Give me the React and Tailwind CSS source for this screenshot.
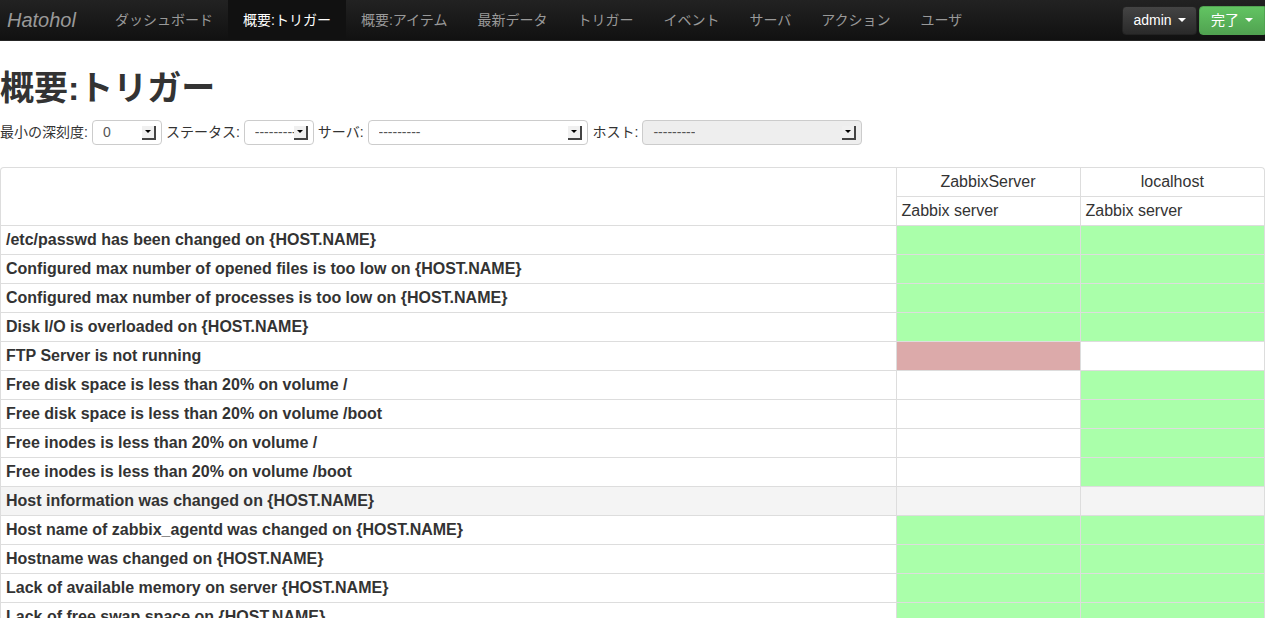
const font = { fontFamily: '"Liberation Sans", "Noto Sans CJK JP", sans-serif' };

const navItems = ['ダッシュボード', '概要:トリガー', '概要:アイテム', '最新データ', 'トリガー', 'イベント', 'サーバ', 'アクション', 'ユーザ'];

const G = 'g';
const R = 'r';
const W = 'w';
const rows = [
  ['/etc/passwd has been changed on {HOST.NAME}', G, G],
  ['Configured max number of opened files is too low on {HOST.NAME}', G, G],
  ['Configured max number of processes is too low on {HOST.NAME}', G, G],
  ['Disk I/O is overloaded on {HOST.NAME}', G, G],
  ['FTP Server is not running', R, W],
  ['Free disk space is less than 20% on volume /', W, G],
  ['Free disk space is less than 20% on volume /boot', W, G],
  ['Free inodes is less than 20% on volume /', W, G],
  ['Free inodes is less than 20% on volume /boot', W, G],
  ['Host information was changed on {HOST.NAME}', 'x', 'x'],
  ['Host name of zabbix_agentd was changed on {HOST.NAME}', G, G],
  ['Hostname was changed on {HOST.NAME}', G, G],
  ['Lack of available memory on server {HOST.NAME}', G, G],
  ['Lack of free swap space on {HOST.NAME}', G, G],
  ['Processor load is too high on {HOST.NAME}', G, G],
];

const cellBg = {
  g: 'bg-[#aaffaa]',
  r: 'bg-[#dcaaaa]',
  w: 'bg-white',
  x: 'bg-[#f4f4f4]',
};

const Caret = () => (
  <span className="inline-block w-0 h-0 border-l-[4px] border-r-[4px] border-t-[4px] border-l-transparent border-r-transparent border-t-white ml-[6px] align-middle" />
);

const Arrow = () => (
  <span className="flex items-center justify-center w-[14px] h-[14px] bg-[#f0f0f0] border-r-[2px] border-b-[2px] border-[#444] shrink-0">
    <span className="w-0 h-0 border-l-[3px] border-r-[3px] border-t-[3px] border-l-transparent border-r-transparent border-t-black" />
  </span>
);

const Select = ({ width, value, disabled }) => (
  <div className={`${width} h-[25px] flex items-center justify-between pl-[10px] pr-[5px] border border-[#ccc] rounded-[4px] ${disabled ? 'bg-[#eeeeee]' : 'bg-white'} overflow-hidden`}>
    <span className="text-[14px] text-[#555] whitespace-nowrap overflow-hidden">{value}</span>
    <Arrow />
  </div>
);

export default function App() {
  return (
    <div className="min-h-screen bg-white text-[#333]" style={font}>
      <div className="h-[41px] flex items-center bg-gradient-to-b from-[#222222] to-[#111111] border-b border-[#252525]">
        <div className="w-[100px] pl-[7px] text-[20px] italic text-[#999] font-light">Hatohol</div>
        <nav className="flex h-full">
          {navItems.map((item, i) => (
            <a
              key={item}
              className={`flex items-center px-[15px] text-[14px] ${i === 1 ? 'bg-[#111] text-white' : 'text-[#999]'}`}
            >
              {item}
            </a>
          ))}
        </nav>
        <div className="ml-auto flex items-center gap-[2px]">
          <button className="h-[29px] w-[75px] flex items-center justify-center rounded-[4px] text-[14px] text-white bg-gradient-to-b from-[#444] to-[#2a2a2a] border border-[#222]">
            admin<Caret />
          </button>
          <button className="h-[29px] w-[66px] flex items-center justify-center rounded-l-[4px] text-[14px] text-white bg-gradient-to-b from-[#62c462] to-[#51a351] border border-[#51a351]">
            完了<Caret />
          </button>
        </div>
      </div>

      <h1 className="mt-[27px] text-[34px] leading-[40px] font-bold">概要:トリガー</h1>

      <div className="mt-[12px] flex items-center text-[14px] text-[#333]">
        <span className="mr-[4px]">最小の深刻度:</span>
        <Select width="w-[70px]" value="0" />
        <span className="ml-[4px] mr-[4px]">ステータス:</span>
        <Select width="w-[70px]" value="---------" />
        <span className="ml-[4px] mr-[4px]">サーバ:</span>
        <Select width="w-[220px]" value="---------" />
        <span className="ml-[5px] mr-[4px]">ホスト:</span>
        <Select width="w-[220px]" value="---------" disabled />
      </div>

      <div className="mt-[22px] border-t border-x border-[#ddd] rounded-t-[4px] overflow-hidden">
        <table className="w-full table-fixed text-[16px] leading-[20px]">
          <colgroup>
            <col className="w-[895px]" />
            <col className="w-[184px]" />
            <col />
          </colgroup>
          <thead>
            <tr>
              <th rowSpan={2} className="border-r border-[#ddd]" />
              <th className="font-normal text-center px-[5px] py-[4px] border-r border-[#ddd]">ZabbixServer</th>
              <th className="font-normal text-center px-[5px] py-[4px]">localhost</th>
            </tr>
            <tr>
              <th className="font-normal text-left px-[5px] py-[4px] border-t border-r border-[#ddd]">Zabbix server</th>
              <th className="font-normal text-left px-[5px] py-[4px] border-t border-[#ddd]">Zabbix server</th>
            </tr>
          </thead>
          <tbody>
            {rows.map(([name, a, b]) => (
              <tr key={name} className={a === 'x' ? 'bg-[#f4f4f4]' : ''}>
                <td className="font-bold px-[5px] py-[4px] border-t border-r border-[#ddd] whitespace-nowrap">{name}</td>
                <td className={`border-t border-r border-[#ddd] ${cellBg[a]}`} />
                <td className={`border-t border-[#ddd] ${cellBg[b]}`} />
              </tr>
            ))}
          </tbody>
        </table>
      </div>
    </div>
  );
}
